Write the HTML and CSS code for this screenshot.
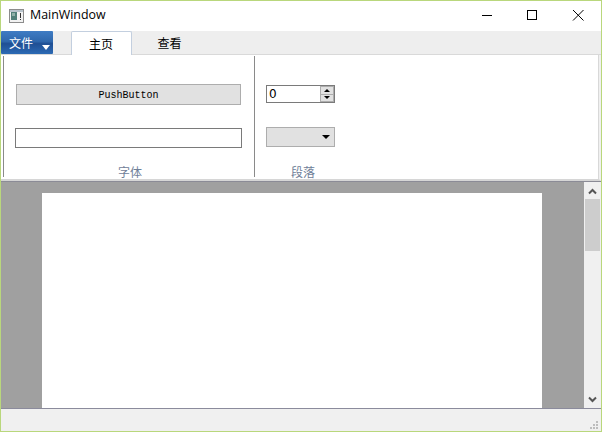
FILE: index.html
```html
<!DOCTYPE html>
<html lang="zh">
<head>
<meta charset="utf-8">
<title>MainWindow</title>
<link rel="stylesheet" href="styles.css">
</head>
<body>
<div class="window">
  <header class="titlebar">
    <svg class="app-icon" width="15" height="14" viewBox="0 0 15 14">
      <rect x="0.5" y="0.5" width="14" height="13" fill="#f2f2f2" stroke="#8c8c8c"/>
      <rect x="1" y="1" width="13" height="2" fill="#b9c4cc"/>
      <rect x="2" y="3" width="6" height="8" fill="#4f7f78"/>
      <rect x="3" y="4" width="3" height="3" fill="#8fb0a8"/>
      <rect x="11" y="4" width="1" height="5" fill="#333"/>
      <rect x="11" y="10" width="1" height="1" fill="#333"/>
    </svg>
    <span class="title">MainWindow</span>
    <div class="controls">
      <svg class="ctl" width="46" height="30" viewBox="0 0 46 30"><rect x="19" y="14" width="10" height="1" fill="#000"/></svg>
      <svg class="ctl" width="46" height="30" viewBox="0 0 46 30"><rect x="18.5" y="9.5" width="9" height="9" fill="none" stroke="#000"/></svg>
      <svg class="ctl" width="46" height="30" viewBox="0 0 46 30"><path d="M18 9 L28.5 19.5 M28.5 9 L18 19.5" stroke="#000" fill="none"/></svg>
    </div>
  </header>
  <nav class="tabbar">
    <div class="file-btn"><span>文件</span><i class="file-arrow"></i></div>
    <div class="tab active">主页</div>
    <div class="tab">查看</div>
  </nav>
  <section class="ribbon">
    <div class="group group-font">
      <div class="group-body">
        <button class="push">PushButton</button>
        <input class="line" type="text">
      </div>
      <div class="group-label">字体</div>
    </div>
    <div class="group group-para">
      <div class="group-body">
        <div class="spin">
          <span class="spin-val">0</span>
          <span class="spin-btns">
            <span class="spin-btn"><i class="up"></i></span>
            <span class="spin-btn"><i class="down"></i></span>
          </span>
        </div>
        <div class="combo"><i class="down big"></i></div>
      </div>
      <div class="group-label">段落</div>
    </div>
  </section>
  <main class="docarea">
    <div class="page-wrap"><div class="page"></div></div>
    <aside class="scrollbar">
      <svg width="17" height="17" viewBox="0 0 17 17"><path d="M5 11.5 L8.5 8 L12 11.5" fill="none" stroke="#555" stroke-width="2"/></svg>
      <div class="track"><div class="thumb"></div></div>
      <svg width="17" height="17" viewBox="0 0 17 17"><path d="M5 6.5 L8.5 10 L12 6.5" fill="none" stroke="#555" stroke-width="2"/></svg>
    </aside>
  </main>
  <footer class="status">
    <svg class="grip" width="8" height="8" viewBox="0 0 8 8" fill="#bdbdbd">
      <rect x="6" y="0" width="2" height="2"/>
      <rect x="3" y="3" width="2" height="2"/><rect x="6" y="3" width="2" height="2"/>
      <rect x="0" y="6" width="2" height="2"/><rect x="3" y="6" width="2" height="2"/><rect x="6" y="6" width="2" height="2"/>
    </svg>
  </footer>
</div>
</body>
</html>
```

FILE: styles.css
```css
* { box-sizing: border-box; }
html, body { margin: 0; padding: 0; }
body { font-family: "Noto Sans CJK SC", sans-serif; background: #fff; }
i { display: block; }

.window {
  width: 602px;
  height: 432px;
  border: 1px solid #b9d77c;
  display: flex;
  flex-direction: column;
  overflow: hidden;
  background: #f0f0f0;
}

.titlebar {
  height: 30px;
  flex: none;
  display: flex;
  align-items: center;
  background: #fff;
  padding-left: 8px;
}
.app-icon { margin-right: 6px; margin-top: -1px; }
.title { font: 12.4px "Open Sans", sans-serif; color: #000; margin-top: -3px; }
.controls { margin-left: auto; display: flex; }
.ctl { display: block; }

.tabbar {
  height: 24px;
  flex: none;
  display: flex;
  background: #eeeeee;
  border-bottom: 1px solid #d9d9d9;
}
.file-btn {
  width: 52px;
  height: 23px;
  background: linear-gradient(#3f7cc4 0, #2f68ad 45%, #1f4f94 55%, #2c6ab4 100%);
  color: #fff;
  font-size: 12px;
  line-height: 23px;
  padding-left: 8px;
  display: flex;
  border-radius: 1px;
}
.file-arrow {
  width: 0;
  height: 0;
  margin: 14px 0 0 9px;
  border-left: 4.5px solid transparent;
  border-right: 4.5px solid transparent;
  border-top: 5px solid #fff;
}
.tab {
  width: 61px;
  height: 24px;
  font-size: 12px;
  line-height: 24px;
  text-align: center;
  color: #000;
}
.tab:nth-child(2) { margin-left: 18px; }
.tab.active {
  background: #fff;
  border: 1px solid #c3cfdf;
  border-bottom: 0;
  border-radius: 2px 2px 0 0;
  padding-right: 1px;
}
.tab:nth-child(3) { margin-left: 7px; }

.ribbon {
  height: 126px;
  flex: none;
  display: flex;
  background: #fff;
  padding: 1px 0 0 2px;
  border-right: 2px solid #f0f0f0;
  border-bottom: 2px solid #d6d6d6;
  box-shadow: inset -1px 0 0 #d8d8d8;
}
.group {
  display: flex;
  flex-direction: column;
  border-left: 1px solid #8a8a8a;
  height: 121px;
}
.group-font { width: 251px; }
.group-para { width: 80px; }
.group-body { height: 108px; flex: none; display: flex; flex-direction: column; }
.group-font .group-body { padding: 28px 0 0 11px; }
.group-para .group-body { padding: 29px 0 0 11px; }
.group-label {
  flex: none;
  font-size: 12px;
  line-height: 15px;
  color: #6f8098;
  text-align: center;
}
.group-font .group-label { padding-left: 2px; }
.group-para .group-label { padding-left: 16px; width: 80px; }

.push {
  width: 225px;
  height: 21px;
  margin-left: 1px;
  background: #e1e1e1;
  border: 1px solid #adadad;
  padding: 2px 0 0;
  font: 10px "Liberation Mono", monospace;
  color: #000;
}
.line {
  display: block;
  width: 227px;
  height: 20px;
  margin-top: 23px;
  border: 1px solid #7a7a7a;
  background: #fff;
  padding: 0;
}

.spin {
  width: 69px;
  height: 18px;
  border: 1px solid #7a7a7a;
  background: #fff;
  display: flex;
  justify-content: space-between;
}
.spin-val { font: 12px/16px "DejaVu Sans", sans-serif; padding-left: 2px; }
.spin-btns { width: 15px; display: flex; flex-direction: column; background: #e1e1e1; border-left: 1px solid #fff; }
.spin-btn { flex: 1; display: flex; align-items: center; justify-content: center; border: 1px solid #adadad; }
.spin-btn + .spin-btn { border-top: 0; }
.up { width: 0; height: 0; border-left: 3px solid transparent; border-right: 3px solid transparent; border-bottom: 3px solid #000; }
.down { width: 0; height: 0; border-left: 3px solid transparent; border-right: 3px solid transparent; border-top: 3px solid #000; }
.down.big { border-left-width: 4px; border-right-width: 4px; border-top-width: 4px; }
.combo {
  width: 69px;
  height: 20px;
  margin-top: 24px;
  background: #e1e1e1;
  border: 1px solid #adadad;
  display: flex;
  align-items: center;
  justify-content: flex-end;
  padding-right: 4px;
}

.docarea {
  height: 228px;
  flex: none;
  display: flex;
  background: #a0a0a0;
  border-top: 1px solid #8b8b96;
  border-bottom: 1px solid #8b8b9c;
}
.page-wrap { flex: 1; padding: 11px 41px 0 41px; overflow: hidden; }
.page { width: 500px; height: 300px; background: #fff; }
.scrollbar {
  width: 17px;
  background: #f0f0f0;
  display: flex;
  flex-direction: column;
}
.scrollbar svg { display: block; flex: none; }
.track { flex: 1; }
.thumb { width: 15px; height: 52px; margin-left: 1px; background: #cdcdcd; }

.status {
  flex: 1;
  display: flex;
  justify-content: flex-end;
  align-items: flex-end;
  background: #f0f0f0;
}
.grip { display: block; margin: 0 3px 2px 0; }
```
